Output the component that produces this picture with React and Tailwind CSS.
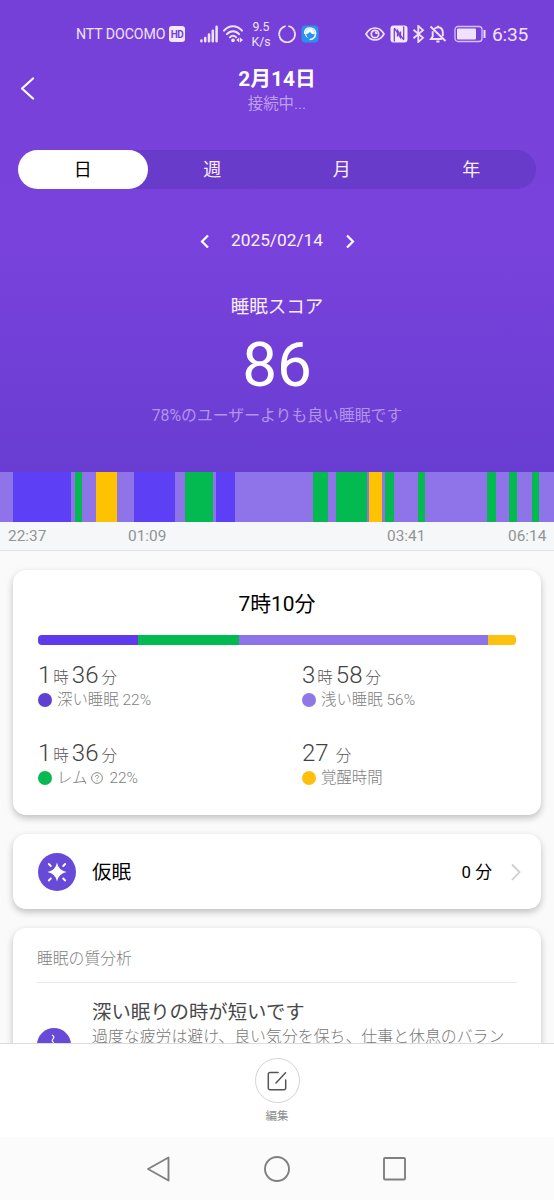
import React from "react";

const COLORS = {
    light: "bg-[#8f73e8]",
    deep: "bg-[#5d3ff5]",
    rem: "bg-[#03ba50]",
    awake: "bg-[#ffc200]",
};

// [stage, width]
const stages = [
    ["light", 13], ["deep", 58], ["light", 4], ["rem", 7], ["light", 14], ["awake", 21],
    ["light", 17], ["deep", 41], ["light", 10], ["rem", 28], ["light", 3], ["deep", 19],
    ["light", 78], ["rem", 15], ["light", 8], ["rem", 31], ["light", 2], ["awake", 13],
    ["light", 3], ["rem", 9], ["light", 24], ["rem", 7], ["light", 62], ["rem", 9],
    ["light", 13], ["rem", 8], ["light", 15], ["rem", 7], ["light", 15],
];

const StatusBar = () => (
    <div className="flex h-[68px] items-center pl-[76px] text-[#f0e2ff]">
        <span className="w-[93px] pt-px text-[14.2px] tracking-[-0.1px] whitespace-nowrap">NTT DOCOMO</span>
        <span className="flex h-4 w-4 items-center justify-center rounded-[3px] bg-[#f3e8ff] text-[10px] font-bold tracking-[-0.5px] text-[#7640d8]">HD</span>
        <svg className="ml-[15px]" width="18" height="18" viewBox="0 0 18 18" fill="none" stroke="currentColor" strokeWidth="2.5" strokeLinecap="round">
            <path d="M1.4 15.600v0.600M5.200 13v3.200M9 9.500v6.700M12.800 5.700v10.500M16.600 1.700v14.500" />
        </svg>
        <svg className="ml-[5px]" width="20" height="18" viewBox="0 0 20 18" fill="none" stroke="currentColor" strokeWidth="2" strokeLinecap="round">
            <path d="M1 5.6C6-0.2 14-0.2 19 5.6M4 9.2c3.4-3.9 8.6-3.9 12 0M6.9 12.3c1.8-2 4.4-2 6.2 0" />
            <circle cx="10" cy="15.4" r="1.8" fill="currentColor" stroke="none" />
            <path d="M16.3 12.6v4.8l-3-2.4zM17 12.6v4.8l3-2.4z" fill="currentColor" stroke="none" />
        </svg>
        <div className="ml-[8px] flex w-5 flex-col items-center pt-px text-[12.3px] leading-[15px] whitespace-nowrap">
            <span>9.5</span>
            <span>K/s</span>
        </div>
        <svg className="ml-[7px]" width="18" height="18" viewBox="0 0 18 18" fill="none" stroke="currentColor" strokeWidth="1.8">
            <path d="M10.400 1.200A7.900 7.900 0 0 1 16.500 6.500M16.900 8.200A7.900 7.900 0 0 1 1.400 11.200M1.200 9.500A7.900 7.900 0 0 1 7.600 1.200" />
            <path d="M16.500 6.500L16.900 8.200M1.400 11.200L1.200 9.500" />
        </svg>
        <svg className="ml-[5px]" width="18" height="18" viewBox="0 0 18 18">
            <rect x="0.500" y="0.500" width="17" height="17" rx="4" fill="#2b91ef" />
            <path d="M3.600 8.200C3.600 5 5.800 3 9 3s5.600 2 5.600 5.200c0 3.500-2 5.800-5.400 6.300" fill="none" stroke="#f6fbff" strokeWidth="1.500" strokeLinecap="round" />
            <path d="M4 8.500C4.500 5 6.500 3.500 9 3.500s4.500 1.500 5 5l-1.500.8C10.500 9 9.500 8 9 6.800 8 8.500 6.500 9 5.300 9c0 1.700.8 3 2.200 3.900C5.400 12.500 4 11 4 8.500z" fill="#f6fbff" />
        </svg>
        <svg className="ml-[46px]" width="20" height="18" viewBox="0 0 20 18" fill="none" stroke="currentColor" strokeWidth="1.700">
            <path d="M1 9C5.500 1 14.500 1 19 9 14.500 17 5.500 17 1 9z" />
            <circle cx="10" cy="9" r="3.700" />
            <path d="M10 7.300a1.800 1.800 0 0 1 1.800 1.800" />
        </svg>
        <svg className="ml-[5px]" width="18" height="18" viewBox="0 0 18 18">
            <rect x="0.500" y="0.500" width="17" height="17" rx="3" fill="#f3e8ff" />
            <path d="M4.300 16.500V3.500M4.300 3L10.500 12.500V6.500M7.500 11.500V5.500L13.700 15M13.700 1.500v13" fill="none" stroke="#7640d8" strokeWidth="1.300" />
        </svg>
        <svg className="ml-[3px]" width="15" height="18" viewBox="0 0 15 18" fill="none" stroke="currentColor" strokeWidth="1.800">
            <path d="M2.500 4.800l9.500 8L7.300 17V1L12 5.200l-9.500 8" />
        </svg>
        <svg className="ml-[3px]" width="18" height="18" viewBox="0 0 18 18" fill="none" stroke="currentColor" strokeWidth="1.900">
            <path d="M1.500 1.500l15 14.500M5.500 3.700C9.500.5 13.800 3 13.800 7.500v3.800M3.700 6.300v5.200L2 14h10.800" />
            <path d="M7.300 16.500h3.200M9 .8v1.600" strokeWidth="2" />
        </svg>
        <svg className="ml-[7px]" width="33" height="18" viewBox="0 0 33 18" fill="none" stroke="currentColor">
            <rect x="1" y="1.500" width="27" height="15" rx="3" strokeWidth="1.300" opacity="0.8" />
            <rect x="3" y="3.500" width="19" height="11" rx="1" fill="currentColor" stroke="none" />
            <path d="M30.500 5v8" strokeWidth="2" />
        </svg>
        <span className="ml-[5px] pt-[2px] text-[19.200px] tracking-[-0.2px]">6:35</span>
    </div>
);

const Tabs = () => (
    <div className="mx-[18px] mt-[32px] flex h-[39px] rounded-full bg-[#693bca] text-[18px] text-[#fbeeff]">
        <button className="flex-1 rounded-full bg-white text-black">日</button>
        <button className="flex-1">週</button>
        <button className="flex-1">月</button>
        <button className="flex-1">年</button>
    </div>
);

const Header = () => (
    <header className="flex h-[472px] shrink-0 flex-col bg-linear-to-b from-[#7540d8] via-[#7942dc] via-50% to-[#693dd2]">
        <StatusBar />
        <div className="flex h-[50px] items-start">
            <svg className="mt-[8px] ml-[20px]" width="16" height="24" viewBox="0 0 16 24" fill="none" stroke="white" strokeWidth="2.200" strokeLinecap="round" strokeLinejoin="round">
                <path d="M13 2.500L2 12.500 13 22.500" />
            </svg>
            <div className="flex flex-1 flex-col items-center pr-[36px] whitespace-nowrap">
                <h1 className="mt-[-3px] text-[20.800px] leading-[28px] font-bold text-white">2月14日</h1>
                <p className="text-[15.400px] leading-[22px] text-[#bd9ff0]">接続中...</p>
            </div>
        </div>
        <Tabs />
        <div className="mt-[40px] flex h-[24px] items-center justify-center text-white">
            <svg width="10" height="14" viewBox="0 0 10 14" fill="none" stroke="currentColor" strokeWidth="2.200">
                <path d="M8 1.500L2 7.500l6 6" />
            </svg>
            <span className="w-[135px] text-center text-[17.300px] text-[#fbeeff]">2025/02/14</span>
            <svg width="10" height="14" viewBox="0 0 10 14" fill="none" stroke="currentColor" strokeWidth="2.200">
                <path d="M2 1.500l6 6-6 6" />
            </svg>
        </div>
        <p className="mt-[40px] text-center text-[18.500px] leading-[28px] text-[#fbeeff]">睡眠スコア</p>
        <p className="mt-[13px] text-center text-[62px] leading-[62px] text-white">86</p>
        <p className="mt-[8px] text-center text-[15.850px] leading-[24px] text-[#b493ed]">78%のユーザーよりも良い睡眠です</p>
    </header>
);

const Timeline = () => (
    <section className="shrink-0">
        <div className="flex h-[50px]">
            {stages.map(([stage, width], i) => (
                <div key={i} className={COLORS[stage]} style={{ width }} />
            ))}
        </div>
        <div className="flex h-[29px] items-center border-b border-[#e3e4e6] bg-[#f5f7f9] pt-px pl-[8px] text-[15.400px] text-[#929496]">
            <span className="w-[120px]">22:37</span>
            <span className="w-[259px]">01:09</span>
            <span className="w-[121px]">03:41</span>
            <span>06:14</span>
        </div>
    </section>
);

const Stat = ({ hours, minutes, color, label, percent, help }) => (
    <div className="h-[78px] w-[264px] whitespace-nowrap">
        <div className="flex h-[26px] items-baseline text-[24px] leading-[27px] font-[350] text-[#424242]">
            {hours && <span>{hours}</span>}
            {hours && <span className="mr-[3px] ml-[2px] text-[15.500px] font-light text-[#555]">時</span>}
            <span>{minutes}</span>
            <span className={hours ? "ml-[3px] text-[15.500px] font-light text-[#555]" : "ml-[7px] text-[15.500px] font-light text-[#555]"}>分</span>
        </div>
        <div className="flex h-[24px] items-center text-[15.400px] font-light text-[#7e7e7e]">
            <span className={`h-[14px] w-[14px] rounded-full ${color}`} />
            <span className="ml-[5px] pt-[2px]">{label}</span>
            {help && (
                <svg className="ml-[4px] mr-[2px]" width="12" height="12" viewBox="0 0 12 12" fill="none" stroke="#8c8c8c" strokeWidth="1">
                    <circle cx="6" cy="6" r="5.400" />
                    <path d="M4.400 4.800C4.400 2.800 7.600 2.800 7.600 4.700 7.600 5.800 6 5.800 6 7.200M6 8.300v1" />
                </svg>
            )}
            {percent && <span className="ml-[4px] pt-[2px]">{percent}</span>}
        </div>
    </div>
);

const card = "shrink-0 rounded-[13px] bg-white shadow-[0_3px_7px_rgba(0,0,0,0.24)]";

const Summary = () => (
    <section className={`${card} h-[245px] px-[25px]`}>
        <h2 className="pt-[20px] text-center text-[20.900px] leading-[29px] text-black">7時10分</h2>
        <div className="mt-[16px] flex h-[10px] w-[478px] overflow-hidden rounded-[4px]">
            <div className="w-[100px] bg-[#5d3bec]" />
            <div className="w-[101px] bg-[#03ba50]" />
            <div className="w-[249px] bg-[#8f73e8]" />
            <div className="flex-1 bg-[#fcc00f]" />
        </div>
        <div className="mt-[17px] flex flex-wrap">
            <Stat hours="1" minutes="36" color="bg-[#6040d0]" label="深い睡眠" percent="22%" />
            <div className="w-[210px]">
                <Stat hours="3" minutes="58" color="bg-[#9077e7]" label="浅い睡眠" percent="56%" />
            </div>
            <Stat hours="1" minutes="36" color="bg-[#07b853]" label="レム" percent="22%" help />
            <div className="w-[210px]">
                <Stat minutes="27" color="bg-[#fcc00c]" label="覚醒時間" />
            </div>
        </div>
    </section>
);

const Nap = () => (
    <section className={`${card} mt-[19px] flex h-[75px] items-center pr-[20px] pl-[25px] text-black`}>
        <svg width="38" height="38" viewBox="0 0 38 38">
            <circle cx="19" cy="19" r="19" fill="#684ad8" />
            <path d="M19 9.500Q20.500 17.500 28.500 19 20.500 20.500 19 28.500 17.500 20.500 9.500 19 17.500 17.500 19 9.500z" fill="white" />
            <path d="M10.800 11l2 2M27.200 11l-2 2M10.800 27.500l2-2M27.200 27.500l-2-2" stroke="white" strokeWidth="1.800" strokeLinecap="round" />
        </svg>
        <span className="ml-[16px] flex-1 pt-[3px] text-[19.500px]">仮眠</span>
        <span className="pt-[2px] text-[16.800px]">0 分</span>
        <svg className="ml-[19px]" width="10" height="18" viewBox="0 0 10 18" fill="none" stroke="#cfcfcf" strokeWidth="1.800">
            <path d="M1 1.500L8.500 9 1 17" />
        </svg>
    </section>
);

const Analysis = () => (
    <section className={`${card} mt-[19px] h-[220px] px-[24px]`}>
        <h3 className="h-[55px] border-b border-[#e9e9e9] pt-[19px] text-[15.800px] leading-[24px] font-light text-[#7e7e7e]">睡眠の質分析</h3>
        <div className="flex pt-[15px]">
            <svg className="mt-[30px] shrink-0" width="34" height="34" viewBox="0 0 34 34">
                <circle cx="17" cy="17" r="17" fill="#684ad8" />
                <path d="M15 7q3 1.500 1 4t1 3.500" fill="none" stroke="white" strokeWidth="1.200" />
                <path d="M10 15h15v8a3 3 0 0 1-3 3h-9a3 3 0 0 1-3-3z" fill="white" />
            </svg>
            <div className="ml-[21px] whitespace-nowrap">
                <h4 className="text-[19.400px] leading-[30px] text-[#484848]">深い眠りの時が短いです</h4>
                <p className="mt-[-2px] text-[15.900px] leading-[22px] font-light text-[#777]">
                    過度な疲労は避け、良い気分を保ち、仕事と休息のバラン
                </p>
            </div>
        </div>
    </section>
);

const EditBar = () => (
    <div className="flex h-[94px] shrink-0 flex-col items-center border-t border-[#dcdcdc] bg-white">
        <button className="mt-[14px] flex h-[45px] w-[45px] items-center justify-center rounded-full border border-[#d4d4d4]">
            <svg width="20" height="20" viewBox="0 0 20 20" fill="none" stroke="#555" strokeWidth="1.500" strokeLinecap="round">
                <path d="M11 1.500H3A1.700 1.700 0 0 0 1.300 3.200V17A1.700 1.700 0 0 0 3 18.700h14a1.700 1.700 0 0 0 1.700-1.700V9M18.500 1.800L9 12" />
            </svg>
        </button>
        <span className="mt-[4px] text-[11.500px] leading-[18px] text-[#8c8c8c]">編集</span>
    </div>
);

const NavBar = () => (
    <nav className="flex h-[63px] shrink-0 items-center bg-[#fbfbfb] pl-[146px]">
        <svg width="26" height="28" viewBox="0 0 26 28" fill="none" stroke="#808080" strokeWidth="1.900" strokeLinejoin="round">
            <path d="M22.500 2.500v23L2 14z" />
        </svg>
        <svg className="ml-[91px]" width="28" height="28" viewBox="0 0 28 28" fill="none" stroke="#808080" strokeWidth="1.900">
            <circle cx="14" cy="14" r="12" />
        </svg>
        <svg className="ml-[91px]" width="26" height="28" viewBox="0 0 26 28" fill="none" stroke="#808080" strokeWidth="1.900">
            <rect x="2" y="3" width="21" height="21.500" rx="1" />
        </svg>
    </nav>
);

const App = () => {
    return (
        <div className="flex h-[1200px] w-[554px] flex-col overflow-hidden bg-[#fafafa] font-['Roboto','Noto_Sans_CJK_JP',sans-serif]">
            <Header />
            <Timeline />
            <main className="flex min-h-0 flex-1 flex-col overflow-hidden px-[13px] pt-[19px]">
                <Summary />
                <Nap />
                <Analysis />
            </main>
            <EditBar />
            <NavBar />
        </div>
    );
};

export default App;
